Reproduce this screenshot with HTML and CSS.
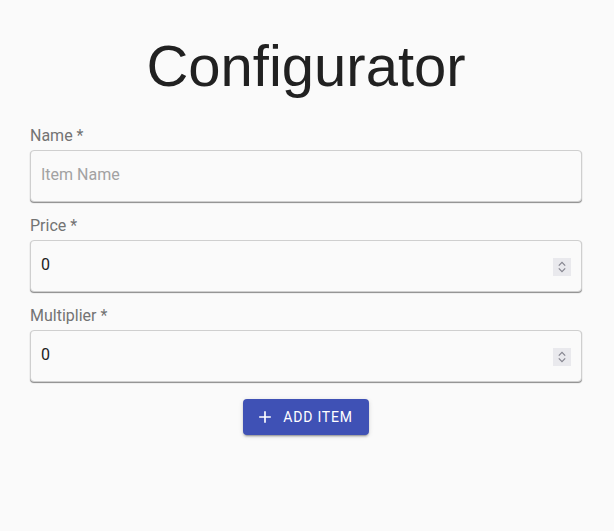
FILE: index.html
```html
<!DOCTYPE html>
<html lang="en">
<head>
<meta charset="utf-8">
<title>Configurator</title>
<link rel="stylesheet" href="styles.css">
</head>
<body>
<main class="page">
  <h1 class="title">Configurator</h1>
  <form class="form">
    <div class="field">
      <label class="label" for="name">Name *</label>
      <div class="control">
        <input class="input" id="name" type="text" placeholder="Item Name">
      </div>
    </div>
    <div class="field">
      <label class="label" for="price">Price *</label>
      <div class="control">
        <input class="input" id="price" type="number" value="0">
        <span class="spin" aria-hidden="true">
          <svg viewBox="0 0 18 18" width="18" height="18"><path d="M5.8 7.6 9 4.4 12.2 7.6M5.8 10.4 9 13.6 12.2 10.4" fill="none" stroke="#85858f" stroke-width="1.2"/></svg>
        </span>
      </div>
    </div>
    <div class="field">
      <label class="label" for="mult">Multiplier *</label>
      <div class="control">
        <input class="input" id="mult" type="number" value="0">
        <span class="spin" aria-hidden="true">
          <svg viewBox="0 0 18 18" width="18" height="18"><path d="M5.8 7.6 9 4.4 12.2 7.6M5.8 10.4 9 13.6 12.2 10.4" fill="none" stroke="#85858f" stroke-width="1.2"/></svg>
        </span>
      </div>
    </div>
    <div class="actions">
      <button class="btn" type="button">
        <svg class="btn-icon" viewBox="0 0 24 24" width="20" height="20" aria-hidden="true"><path d="M19 13h-6v6h-2v-6H5v-2h6V5h2v6h6v2z" fill="currentColor"/></svg>
        <span>Add Item</span>
      </button>
    </div>
  </form>
</main>
</body>
</html>
```
FILE: styles.css
```css
* { box-sizing: border-box; }
html, body { margin: 0; padding: 0; }
body {
  background: #fafafa;
  font-family: Roboto, "Liberation Sans", Arial, sans-serif;
  color: #212121;
  width: 614px;
  height: 531px;
}
.page {
  padding: 31px 32px 0 30px;
}
.title {
  margin: 0 0 23px;
  font-family: "Liberation Sans", Arial, sans-serif;
  font-weight: 400;
  font-size: 58px;
  line-height: 70px;
  text-align: center;
  color: #212121;
}
.form {
  display: flex;
  flex-direction: column;
}
.field {
  display: flex;
  flex-direction: column;
  margin-bottom: 12px;
}
.label {
  font-size: 16px;
  line-height: 24px;
  color: #737373;
  margin-bottom: 2px;
}
.control {
  position: relative;
}
.input {
  display: block;
  height: 52px;
  width: 100%;
  padding: 0 40px 3px 10px;
  font-family: Roboto, "Liberation Sans", Arial, sans-serif;
  font-size: 16px;
  color: #212121;
  background: #fafafa;
  border: 1px solid #cfcfcf;
  border-radius: 4px;
  box-shadow: 0 1px 1px rgba(0, 0, 0, 0.45);
  outline: none;
}
.input::placeholder { color: #a2a2a2; }
.input::-webkit-inner-spin-button,
.input::-webkit-outer-spin-button {
  -webkit-appearance: none;
  margin: 0;
}
.spin {
  position: absolute;
  top: 18px;
  right: 11px;
  width: 18px;
  height: 18px;
  background: #e9e9ed;
  display: flex;
}
.actions {
  display: flex;
  justify-content: center;
  margin-top: 5px;
}
.btn {
  display: inline-flex;
  align-items: center;
  height: 36px;
  padding: 6px 16px;
  border: 0;
  border-radius: 4px;
  background: #3f51b5;
  color: #fff;
  font-family: Roboto, "Liberation Sans", Arial, sans-serif;
  font-size: 14px;
  font-weight: 400;
  letter-spacing: 0.8px;
  text-transform: uppercase;
  box-shadow: 0 3px 1px -2px rgba(0,0,0,0.2), 0 2px 2px 0 rgba(0,0,0,0.14), 0 1px 5px 0 rgba(0,0,0,0.12);
  cursor: pointer;
}
.btn-icon {
  margin-left: -4px;
  margin-right: 8px;
}
```
